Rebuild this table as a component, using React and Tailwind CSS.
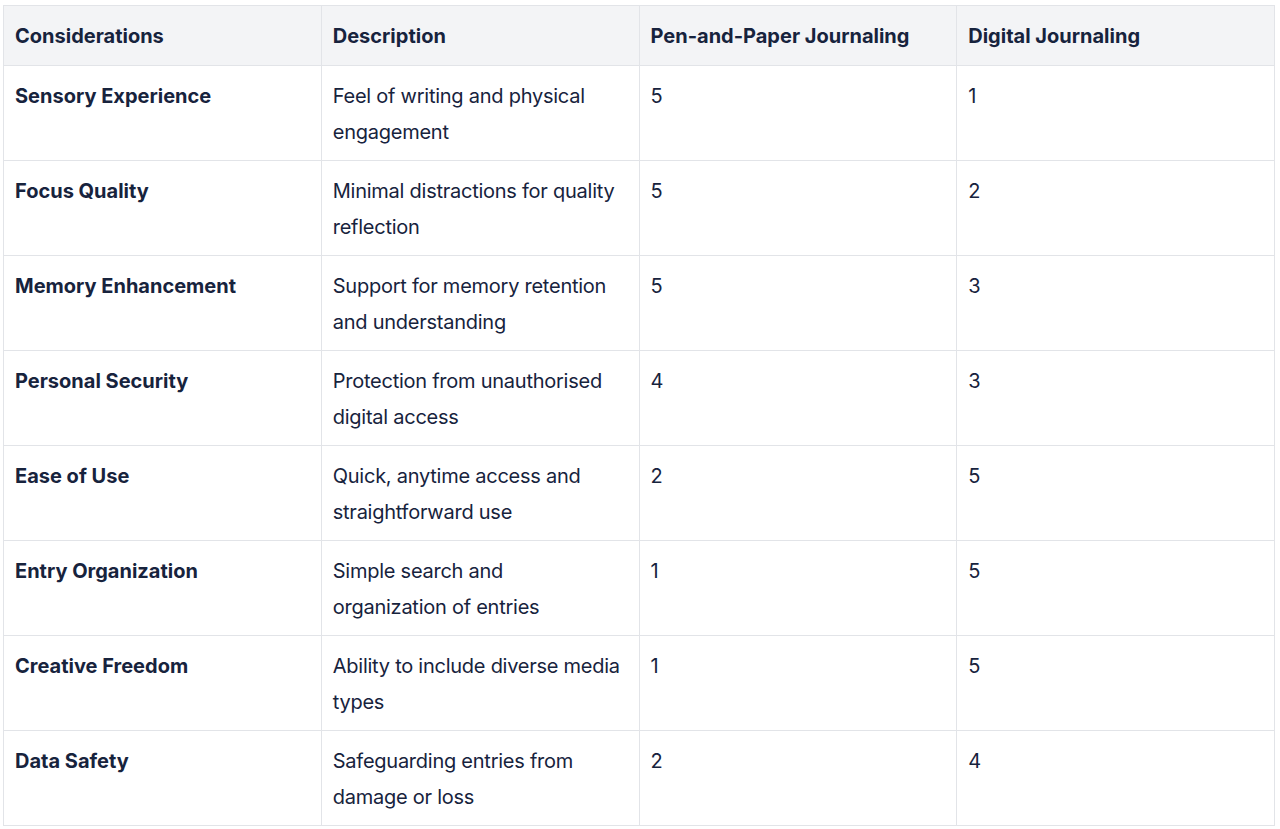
import React from "react";

const rows = [
  ["Sensory Experience", "Feel of writing and physical engagement", "5", "1"],
  ["Focus Quality", "Minimal distractions for quality reflection", "5", "2"],
  ["Memory Enhancement", "Support for memory retention and understanding", "5", "3"],
  ["Personal Security", "Protection from unauthorised digital access", "4", "3"],
  ["Ease of Use", "Quick, anytime access and straightforward use", "2", "5"],
  ["Entry Organization", "Simple search and organization of entries", "1", "5"],
  ["Creative Freedom", "Ability to include diverse media types", "1", "5"],
  ["Data Safety", "Safeguarding entries from damage or loss", "2", "4"],
];

const headers = ["Considerations", "Description", "Pen-and-Paper Journaling", "Digital Journaling"];

const App = () => {
  return (
    <div className="bg-white pl-[3px] pt-[5px] font-['Inter','Liberation_Sans',sans-serif] text-[#17233d]">
      <table className="w-[1272px] table-fixed border-collapse border border-[#e2e4e8] text-[20px] leading-[36px]">
        <thead>
          <tr className="bg-[#f3f4f6]">
            {headers.map((h) => (
              <th key={h} className="border border-[#e2e4e8] px-[11px] pt-[12px] pb-[11px] text-left font-bold align-top">
                {h}
              </th>
            ))}
          </tr>
        </thead>
        <tbody>
          {rows.map((r) => (
            <tr key={r[0]}>
              <td className="h-[95px] border border-[#e2e4e8] px-[11px] pt-[12px] pb-[10px] align-top font-bold">{r[0]}</td>
              <td className="border border-[#e2e4e8] pl-[11px] pr-[17px] pt-[12px] pb-[10px] align-top tracking-[-0.25px]">{r[1]}</td>
              <td className="border border-[#e2e4e8] px-[11px] pt-[12px] pb-[10px] align-top">{r[2]}</td>
              <td className="border border-[#e2e4e8] px-[11px] pt-[12px] pb-[10px] align-top">{r[3]}</td>
            </tr>
          ))}
        </tbody>
      </table>
    </div>
  );
};

export default App;
